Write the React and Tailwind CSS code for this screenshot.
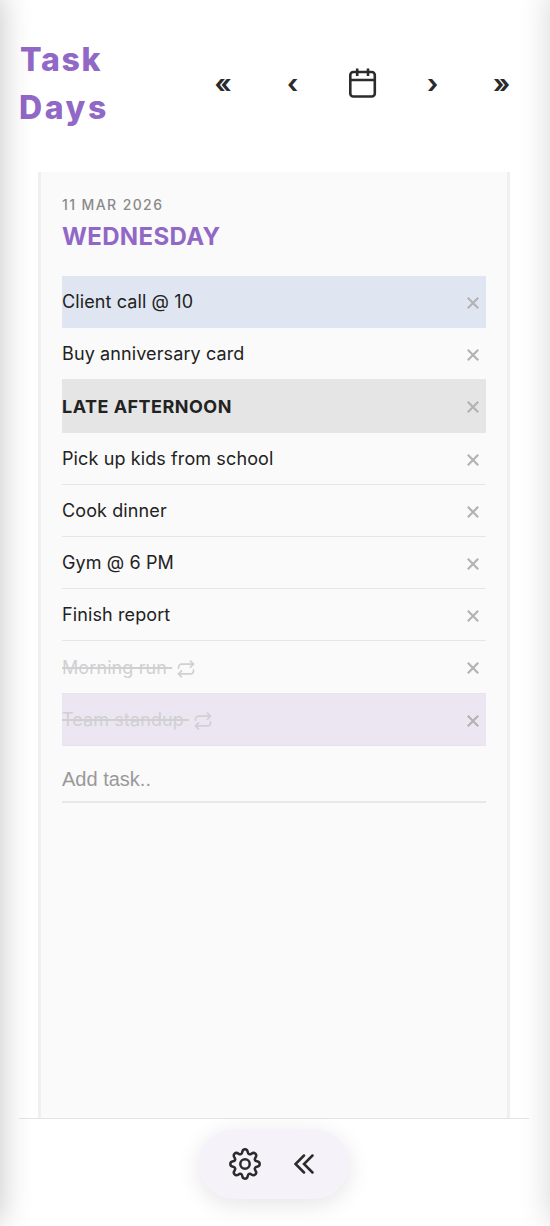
import React from 'react';

const tasks = [
  { id: 1, text: 'Client call @ 10', row: 'bg-[#e0e6f1] border-[#e2e6ef]' },
  { id: 2, text: 'Buy anniversary card', row: 'border-[#e6e6e6]' },
  { id: 3, text: 'LATE AFTERNOON', row: 'bg-[#e5e5e5] border-[#e5e5e5]', bold: true },
  { id: 4, text: 'Pick up kids from school', row: 'border-[#e6e6ea]' },
  { id: 5, text: 'Cook dinner', row: 'border-[#e6e6ea]' },
  { id: 6, text: 'Gym @ 6 PM', row: 'border-[#e6e6ea]' },
  { id: 7, text: 'Finish report', row: 'border-[#e6e6ea]' },
  { id: 8, text: 'Morning run', row: 'border-[#e6e6ea]', done: true },
  { id: 9, text: 'Team standup', row: 'bg-[#ece6f2] border-[#e6e3eb]', done: true },
];

function RepeatIcon() {
  return (
    <svg
      className="w-[18px] h-[18px] ml-[5px] mt-[4px] text-[#d0d0d2]"
      viewBox="0 0 24 24"
      fill="none"
      stroke="currentColor"
      strokeWidth="2.2"
      strokeLinecap="round"
      strokeLinejoin="round"
    >
      <path d="m18 1.500 4 4-4 4" />
      <path d="M2 11V9.500a4 4 0 0 1 4-4h16" />
      <path d="m6 22.500-4-4 4-4" />
      <path d="M22 13v1.500a4 4 0 0 1-4 4H2" />
    </svg>
  );
}

function TaskRow({ task }) {
  return (
    <li className={`flex items-center h-[52.2px] border-b-[1.5px] ${task.row}`}>
      {task.done ? (
        <span className="pt-px text-[18px] tracking-[0.1px] text-[#d0d0d2] line-through decoration-[1.5px] whitespace-pre">
          {task.text + ' '}
        </span>
      ) : (
        <span
          className={
            task.bold
              ? 'pt-px text-[18px] font-bold tracking-[0.48px] text-[#222]'
              : 'text-[18px] tracking-[0.11px] text-[#222]'
          }
        >
          {task.text}
        </span>
      )}
      {task.done && <RepeatIcon />}
      <button className="ml-auto mr-[7px] mt-[3px]">
        <svg className="w-3 h-3" viewBox="0 0 12 12" fill="none" stroke="#b3b3b3" strokeWidth="2.2">
          <path d="M.8.8l10.4 10.4M11.2.8.8 11.2" />
        </svg>
      </button>
    </li>
  );
}

function Header() {
  return (
    <header className="flex h-[172px] pl-5 text-[#2b2b2b]">
      <h1 className="w-[184px] pt-9 text-[32px] leading-[48px] font-extrabold text-[#9168c6]">
        <span className="tracking-[1.7px]">Task</span>
        <br />
        <span className="-ml-px tracking-[2.6px]">Days</span>
      </h1>
      <nav className="flex h-[165px] items-center text-[26px] font-bold">
        <button className="w-[38px] pt-0.5 text-center">«</button>
        <button className="ml-[31px] w-[39px] pt-0.5 text-center">‹</button>
        <button className="ml-[31px] w-[39px] flex justify-center">
          <svg className="w-[30px] h-[32px]" viewBox="0 0 30 32" fill="none" stroke="currentColor" strokeWidth="2.6">
            <rect x="2.3" y="5" width="24.5" height="24.5" rx="3" />
            <path d="M2.3 13h24.5M9.2 1.5v7.5M20 1.5v7.5" />
          </svg>
        </button>
        <button className="ml-[31px] w-[39px] pt-0.5 text-center">›</button>
        <button className="ml-[30px] w-[39px] pt-0.5 text-center">»</button>
      </nav>
    </header>
  );
}

function Toolbar() {
  return (
    <div className="flex items-center w-[150px] h-[70px] mt-[10px] ml-[199px] rounded-full bg-[#f5f2fa] text-[#2b2b2b] shadow-[0_5px_24px_rgba(0,0,0,0.11)]">
      <button className="ml-[29.5px]">
        <svg
          className="w-8 h-8"
          viewBox="0 0 32 32"
          fill="none"
          stroke="currentColor"
          strokeWidth="2.5"
          strokeLinejoin="round"
        >
          <circle cx="16" cy="16" r="4.7" />
          <path d="M13.2 4.2C13.5 2.4 14.3 1.3 16 1.3s2.5 1.1 2.8 2.9c.3 2 2 2.7 3.6 1.5 1.5-1.1 2.8-1.2 4 0s1.100 2.500 0 4c-1.200 1.600-.5 3.300 1.500 3.600 1.800.3 2.800 1.100 2.800 2.700s-1 2.500-2.800 2.800c-2 .3-2.700 2-1.500 3.600 1.100 1.500 1.200 2.800 0 4s-2.500 1.100-4 0c-1.600-1.200-3.300-.5-3.600 1.500-.3 1.800-1.100 2.800-2.800 2.800s-2.500-1-2.800-2.800c-.3-2-2-2.700-3.600-1.500-1.500 1.100-2.800 1.200-4 0s-1.100-2.500 0-4c1.200-1.600.5-3.300-1.500-3.600-1.800-.3-2.800-1.200-2.800-2.800s1-2.400 2.800-2.700c2-.3 2.700-2 1.500-3.600-1.100-1.500-1.200-2.800 0-4s2.500-1.100 4 0c1.600 1.200 3.300.5 3.600-1.500Z" />
        </svg>
      </button>
      <button className="ml-[33px]">
        <svg className="w-5 h-5" viewBox="0 0 20 20" fill="none" stroke="currentColor" strokeWidth="2.5" strokeLinecap="round">
          <path d="M10 1.500 1.500 10l8.500 8.500M18.500 1.500 10 10l8.500 8.500" />
        </svg>
      </button>
    </div>
  );
}

function App() {
  return (
    <div className="relative w-[550px] h-[1226px] overflow-hidden bg-white font-['Inter',sans-serif]">
      <Header />
      <div className="ml-[19px] mr-[21px] h-[947px] flex flex-col border-b-[1.5px] border-[#e4e4e8]">
        <main className="mx-[19px] flex-1 border-x-[3px] border-[#f0f0f0] bg-[#fafafa] pl-[21px] pr-[21px]">
          <p className="pt-[23px] text-[14px] leading-5 font-medium tracking-[1.4px] text-[#8a8a8a]">11 MAR 2026</p>
          <h2 className="mt-[6px] text-2xl leading-8 font-bold tracking-[0.35px] text-[#9168c6]">WEDNESDAY</h2>
          <ul className="mt-[23px]">
            {tasks.map((task) => (
              <TaskRow key={task.id} task={task} />
            ))}
          </ul>
          <input
            className="block w-full h-[57px] pt-3 border-b-2 border-[#e8e8e8] font-['Liberation_Sans',sans-serif] text-[20px] placeholder:text-[#999] outline-none"
            placeholder="Add task.."
          />
        </main>
      </div>
      <Toolbar />
      {/* soft shade along the window edges */}
      <div className="absolute left-[-40px] top-[-8px] w-10 h-[1230px] shadow-[0_0_32px_rgba(0,0,0,0.24)] pointer-events-none" />
      <div className="absolute right-[-40px] top-[-8px] w-10 h-[1230px] shadow-[0_0_32px_rgba(0,0,0,0.17)] pointer-events-none" />
    </div>
  );
}

export default App;
